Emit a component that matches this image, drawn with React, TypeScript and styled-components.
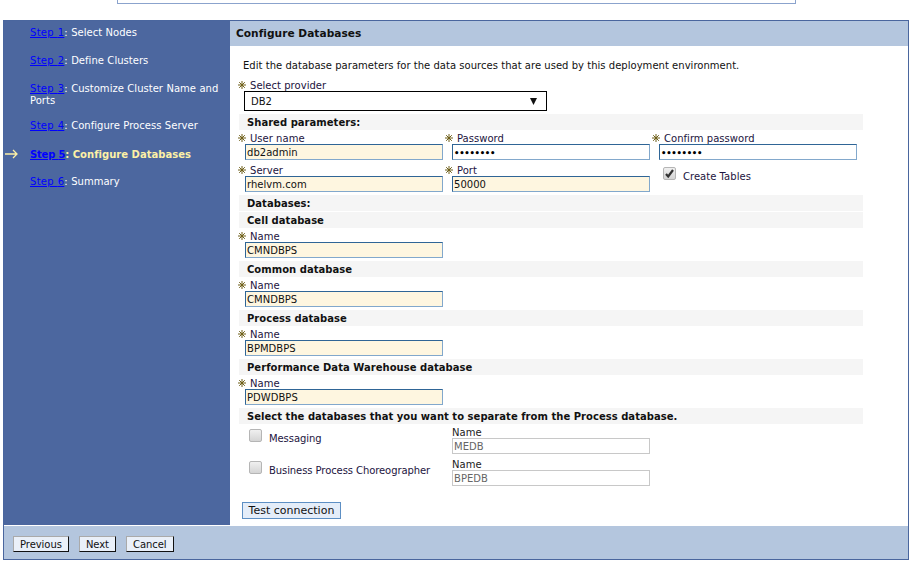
import React from "react";
import styled, { createGlobalStyle } from "styled-components";

const Global = createGlobalStyle`
  html, body { margin: 0; padding: 0; background: #fff; }
  body { font-family: "DejaVu Sans", Verdana, sans-serif; font-size: 10px; letter-spacing: 0.03px; color: #111; overflow: hidden; }
  * { box-sizing: border-box; }
`;

const TopStub = styled.div`
  width: 679px; height: 4px; margin-left: 117px;
  background: #fff; border: 1px solid #8ba3cd; border-top: none;
`;
const Frame = styled.div`
  width: 906px; height: 540px; margin: 16px 0 0 3px;
  border: 1px solid #4a669e;
  display: flex; flex-direction: column;
`;
const Body = styled.div`flex: 1; display: flex; min-height: 0;`;
const Nav = styled.nav`
  width: 226px; background: #4c679f; padding: 5px 5px 0 26px; color: #fff;
  display: flex; flex-direction: column;
`;
const NavItem = styled.div<{ $h: number; $active?: boolean }>`
  position: relative; height: ${p => p.$h}px; line-height: 12px; padding-top: 1px;
  font-weight: ${p => (p.$active ? "bold" : "normal")};
  color: ${p => (p.$active ? "#fdf1a6" : "#fff")};
  word-spacing: ${p => (p.$active ? "0" : "0.2px")};
  a { color: #0000ff; text-decoration: underline; letter-spacing: ${p => (p.$active ? "-0.2px" : "0.3px")}; }
`;
const Arrow = styled.svg`position: absolute; left: -25px; top: 1px;`;
const Main = styled.main`flex: 1; min-width: 0; display: flex; flex-direction: column;`;
const Title = styled.h1`
  margin: 0; height: 25px; background: #b4c6de; padding: 0 6px;
  font-size: 10.6px; font-weight: bold; line-height: 24px; color: #111;
`;
const Content = styled.div`flex: 1; padding: 12px 0 0 9px; width: 633px;`;
const Intro = styled.p`margin: 0 0 0 4px; height: 21px; line-height: 16px;`;
const Bar = styled.div<{ $gap?: number }>`
  background: #f5f5f5; height: 16px; line-height: 18px; font-weight: bold; padding-left: 8px;
  margin-bottom: ${p => p.$gap ?? 0}px; color: #111;
`;
const Row = styled.div<{ $gap?: number }>`
  display: flex; gap: 9px; margin-bottom: ${p => p.$gap ?? 3}px; padding-left: 6px;
`;
const Field = styled.div`width: 198px; position: relative; display: flex; flex-direction: column;`;
const Label = styled.label`
  display: block; height: 13px; line-height: 17px; padding-left: 5px; white-space: nowrap; color: #1c1440;
`;
const Star = styled.svg`position: absolute; left: -7px; top: 4px;`;
const Input = styled.div<{ $fill?: string; $muted?: boolean }>`
  height: 16px; width: 198px; line-height: 16px; padding-left: 1px; margin-top: 1px;
  background: ${p => p.$fill ?? "#fff"};
  border: 1px solid;
  border-color: ${p => (p.$muted ? "#c8c8c8" : "#2f6596 #82a8cc #82a8cc #2f6596")};
  color: ${p => (p.$muted ? "#666" : "#111")};
  overflow: hidden; white-space: nowrap;
`;
const Dots = styled.span`font-size: 8.5px; font-weight: bold; letter-spacing: -0.3px; color: #000;`;
const SelectBox = styled.div`
  width: 303px; height: 20px; margin: 0 0 3px 5px; border: 1px solid #000; background: #fff;
  display: flex; align-items: center; justify-content: space-between; padding: 0 9px 0 6px;
`;
const ProviderLabel = styled(Label)`position: relative; margin-left: 6px; height: 12px; line-height: 13px;`;
const ProviderStar = styled(Star)`top: 2px;`;
const CheckWrap = styled.div`display: flex; gap: 7px; margin: 5px 0 0 4px; color: #1c1440;`;
const Box = styled.div`
  width: 13px; height: 13px; border: 1px solid #b5b5b5; border-radius: 2px;
  background: linear-gradient(#f0f0f0, #d4d4d4); display: flex; align-items: center; justify-content: center;
  flex: none;
`;
const BoxCaption = styled.span`line-height: 19px;`;
const OptRow = styled.div`display: flex; height: 32px; padding-left: 10px;`;
const OptCheck = styled.div`width: 203px; display: flex; gap: 7px; padding-top: 5px; color: #1c1440; line-height: 19px; letter-spacing: -0.08px; white-space: nowrap;`;
const OptField = styled.div`display: flex; flex-direction: column;`;
const OptLabel = styled.div`height: 13px; line-height: 18px; color: #222;`;
const Buttons = styled.div`margin: 14px 0 0 3px;`;
const TestBtn = styled.button`
  display: block; height: 17px; width: 99px; padding: 0; font: inherit; font-size: 11px; color: #111;
  background: #e4edf9; border: 1px solid #5d8fc4; line-height: 15px;
`;
const Footer = styled.footer`
  height: 33px; margin-top: 1px; background: #b4c6de; display: flex; gap: 10px; padding: 10px 0 0 9px;
`;
const FootBtn = styled.button`
  height: 16px; padding: 0 6px; font: inherit; letter-spacing: -0.05px; color: #111; line-height: 13px;
  background: #eaf0f9; border: 1px solid; border-color: #aaa #111 #111 #aaa;
`;

const StarPath = () => (
  <path d="M4 0v8M0 4h8M1.2 1.2l5.6 5.6M6.8 1.2l-5.6 5.6" stroke="#6e5f18" strokeWidth="1" />
);
const Asterisk = () => (
  <Star width="8" height="8" viewBox="0 0 8 8"><StarPath /></Star>
);

const Req = ({ label, value, fill = "#fef6e0", children }: { label: string; value?: string; fill?: string; children?: React.ReactNode }) => (
  <Field>
    <Label><Asterisk />{label}</Label>
    <Input $fill={fill}>{children ?? value}</Input>
  </Field>
);

const Tick = () => (
  <svg width="9" height="9" viewBox="0 0 9 9"><path d="M1 5l2.2 2.5L8 1" fill="none" stroke="#333" strokeWidth="2.2" /></svg>
);

const steps: { n: number; text: React.ReactNode; h: number }[] = [
  { n: 1, text: "Select Nodes", h: 28 },
  { n: 2, text: "Define Clusters", h: 28 },
  { n: 3, text: <>Customize Cluster Name and<br />Ports</>, h: 37 },
  { n: 4, text: "Configure Process Server", h: 29 },
  { n: 5, text: "Configure Databases", h: 27 },
  { n: 6, text: "Summary", h: 28 },
];

const dbs = [
  ["Cell database", "CMNDBPS"],
  ["Common database", "CMNDBPS"],
  ["Process database", "BPMDBPS"],
  ["Performance Data Warehouse database", "PDWDBPS"],
];

export default function App() {
  return (
    <>
      <Global />
      <TopStub />
      <Frame>
        <Body>
          <Nav>
            {steps.map(s => (
              <NavItem key={s.n} $h={s.h} $active={s.n === 5}>
                {s.n === 5 && (
                  <Arrow width="14" height="10" viewBox="0 0 14 10">
                    <path d="M0 5h12M8 1l4 4-4 4" fill="none" stroke="#fdf1a6" strokeWidth="1.3" />
                  </Arrow>
                )}
                <a href="#">Step {s.n}</a>: {s.text}
              </NavItem>
            ))}
          </Nav>
          <Main>
            <Title>Configure Databases</Title>
            <Content>
              <Intro>Edit the database parameters for the data sources that are used by this deployment environment.</Intro>
              <ProviderLabel>
                <ProviderStar width="8" height="8" viewBox="0 0 8 8"><StarPath /></ProviderStar>
                Select provider
              </ProviderLabel>
              <SelectBox>
                <span>DB2</span>
                <svg width="7" height="7" viewBox="0 0 7 7"><path d="M0 0h7L3.5 7z" fill="#111" /></svg>
              </SelectBox>
              <Bar>Shared parameters:</Bar>
              <Row $gap={2}>
                <Req label="User name" value="db2admin" />
                <Req label="Password" fill="#fff"><Dots>••••••••</Dots></Req>
                <Req label="Confirm password" fill="#fff"><Dots>••••••••</Dots></Req>
              </Row>
              <Row>
                <Req label="Server" value="rhelvm.com" />
                <Req label="Port" value="50000" />
                <CheckWrap>
                  <Box><Tick /></Box>
                  <BoxCaption>Create Tables</BoxCaption>
                </CheckWrap>
              </Row>
              <Bar $gap={1}>Databases:</Bar>
              {dbs.map(([title, value]) => (
                <React.Fragment key={title}>
                  <Bar>{title}</Bar>
                  <Row><Req label="Name" value={value} /></Row>
                </React.Fragment>
              ))}
              <Bar>Select the databases that you want to separate from the Process database.</Bar>
              <OptRow>
                <OptCheck><Box /><span>Messaging</span></OptCheck>
                <OptField><OptLabel>Name</OptLabel><Input $muted>MEDB</Input></OptField>
              </OptRow>
              <OptRow>
                <OptCheck><Box /><span>Business Process Choreographer</span></OptCheck>
                <OptField><OptLabel>Name</OptLabel><Input $muted>BPEDB</Input></OptField>
              </OptRow>
              <Buttons><TestBtn>Test connection</TestBtn></Buttons>
            </Content>
          </Main>
        </Body>
        <Footer>
          <FootBtn>Previous</FootBtn>
          <FootBtn>Next</FootBtn>
          <FootBtn>Cancel</FootBtn>
        </Footer>
      </Frame>
    </>
  );
}
